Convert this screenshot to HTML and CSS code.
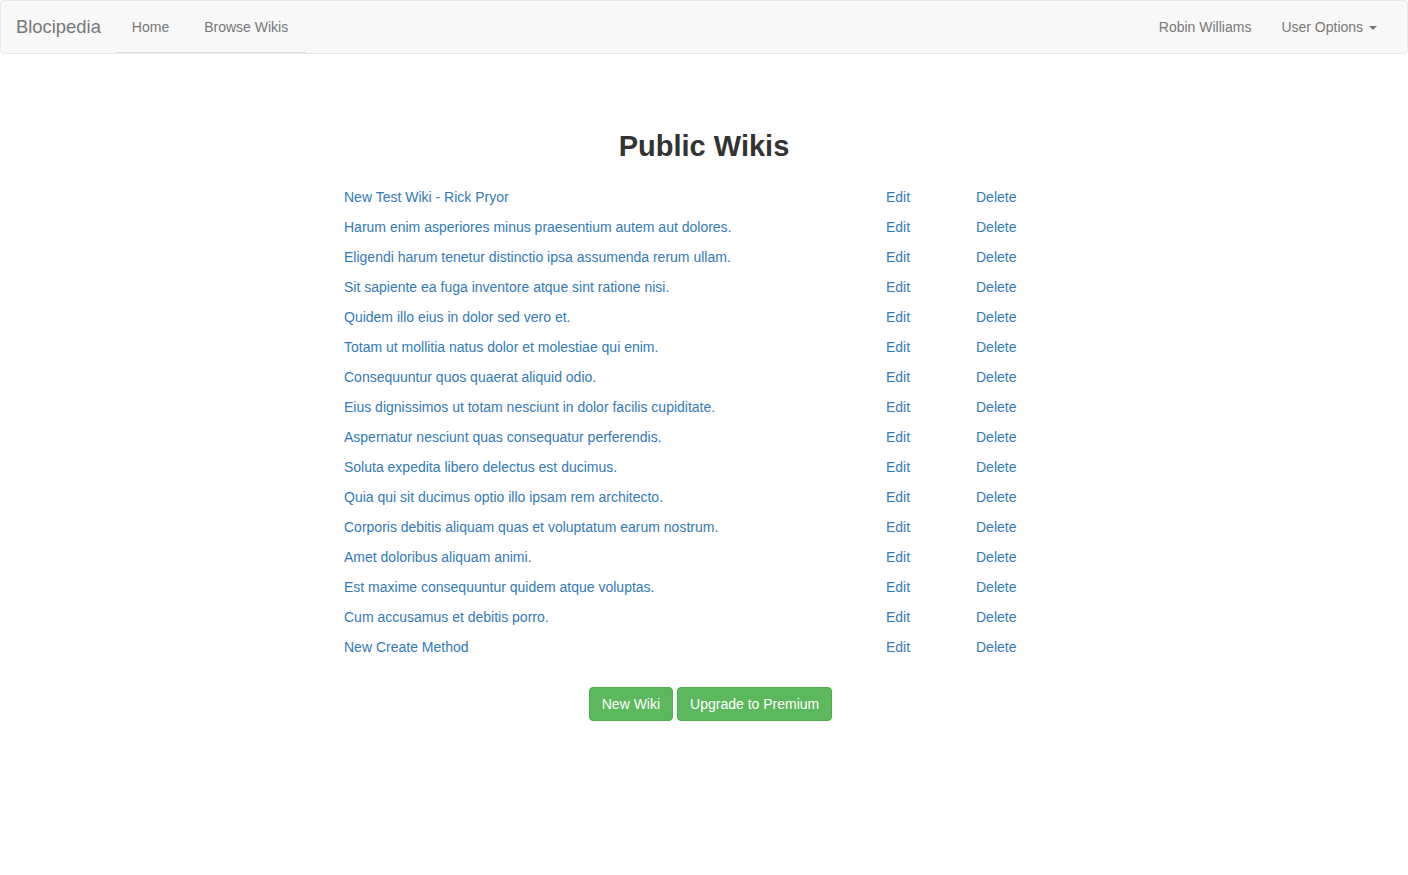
FILE: index.html
```html
<!DOCTYPE html>
<html>
<head>
<meta charset="utf-8">
<title>Blocipedia</title>
<link rel="stylesheet" href="styles.css">
</head>
<body>
<nav class="navbar">
  <a class="brand" href="#">Blocipedia</a>
  <ul class="nav nav-left">
    <li><a href="#">Home</a></li>
    <li><a href="#">Browse Wikis</a></li>
  </ul>
  <ul class="nav nav-right">
    <li><a href="#">Robin Williams</a></li>
    <li><a href="#">User Options <span class="caret"></span></a></li>
  </ul>
</nav>
<main class="content">
  <h1 class="title">Public Wikis</h1>
  <table class="wikis">
    <tbody>
      <tr><td class="c-title"><a href="#">New Test Wiki - Rick Pryor</a></td><td class="c-edit"><a href="#">Edit</a></td><td class="c-del"><a href="#">Delete</a></td></tr>
      <tr><td class="c-title"><a href="#">Harum enim asperiores minus praesentium autem aut dolores.</a></td><td class="c-edit"><a href="#">Edit</a></td><td class="c-del"><a href="#">Delete</a></td></tr>
      <tr><td class="c-title"><a href="#">Eligendi harum tenetur distinctio ipsa assumenda rerum ullam.</a></td><td class="c-edit"><a href="#">Edit</a></td><td class="c-del"><a href="#">Delete</a></td></tr>
      <tr><td class="c-title"><a href="#">Sit sapiente ea fuga inventore atque sint ratione nisi.</a></td><td class="c-edit"><a href="#">Edit</a></td><td class="c-del"><a href="#">Delete</a></td></tr>
      <tr><td class="c-title"><a href="#">Quidem illo eius in dolor sed vero et.</a></td><td class="c-edit"><a href="#">Edit</a></td><td class="c-del"><a href="#">Delete</a></td></tr>
      <tr><td class="c-title"><a href="#">Totam ut mollitia natus dolor et molestiae qui enim.</a></td><td class="c-edit"><a href="#">Edit</a></td><td class="c-del"><a href="#">Delete</a></td></tr>
      <tr><td class="c-title"><a href="#">Consequuntur quos quaerat aliquid odio.</a></td><td class="c-edit"><a href="#">Edit</a></td><td class="c-del"><a href="#">Delete</a></td></tr>
      <tr><td class="c-title"><a href="#">Eius dignissimos ut totam nesciunt in dolor facilis cupiditate.</a></td><td class="c-edit"><a href="#">Edit</a></td><td class="c-del"><a href="#">Delete</a></td></tr>
      <tr><td class="c-title"><a href="#">Aspernatur nesciunt quas consequatur perferendis.</a></td><td class="c-edit"><a href="#">Edit</a></td><td class="c-del"><a href="#">Delete</a></td></tr>
      <tr><td class="c-title"><a href="#">Soluta expedita libero delectus est ducimus.</a></td><td class="c-edit"><a href="#">Edit</a></td><td class="c-del"><a href="#">Delete</a></td></tr>
      <tr><td class="c-title"><a href="#">Quia qui sit ducimus optio illo ipsam rem architecto.</a></td><td class="c-edit"><a href="#">Edit</a></td><td class="c-del"><a href="#">Delete</a></td></tr>
      <tr><td class="c-title"><a href="#">Corporis debitis aliquam quas et voluptatum earum nostrum.</a></td><td class="c-edit"><a href="#">Edit</a></td><td class="c-del"><a href="#">Delete</a></td></tr>
      <tr><td class="c-title"><a href="#">Amet doloribus aliquam animi.</a></td><td class="c-edit"><a href="#">Edit</a></td><td class="c-del"><a href="#">Delete</a></td></tr>
      <tr><td class="c-title"><a href="#">Est maxime consequuntur quidem atque voluptas.</a></td><td class="c-edit"><a href="#">Edit</a></td><td class="c-del"><a href="#">Delete</a></td></tr>
      <tr><td class="c-title"><a href="#">Cum accusamus et debitis porro.</a></td><td class="c-edit"><a href="#">Edit</a></td><td class="c-del"><a href="#">Delete</a></td></tr>
      <tr><td class="c-title"><a href="#">New Create Method</a></td><td class="c-edit"><a href="#">Edit</a></td><td class="c-del"><a href="#">Delete</a></td></tr>
    </tbody>
  </table>
  <div class="actions">
    <a class="btn" href="#">New Wiki</a>
    <a class="btn" href="#">Upgrade to Premium</a>
  </div>
</main>
</body>
</html>
```

FILE: styles.css
```css
* { box-sizing: border-box; }
html, body { margin: 0; padding: 0; }
body {
  font-family: "Liberation Sans", Arial, sans-serif;
  font-size: 14px;
  line-height: 20px;
  color: #333;
  background: #fff;
}
a { color: #337ab7; text-decoration: none; }

.navbar {
  display: flex;
  align-items: flex-start;
  height: 54px;
  background: #f8f8f8;
  border: 1px solid #e7e7e7;
  border-radius: 4px;
  padding: 0 15px;
}
.brand {
  color: #777;
  font-size: 18.4px;
  line-height: 20px;
  padding: 16px 15px 15px 0;
}
.nav {
  list-style: none;
  margin: 0;
  padding: 0;
  display: flex;
}
.nav-left {
  height: 52px;
  border-bottom: 1px solid #ddd;
  padding-left: 1px;
  padding-right: 3px;
  gap: 5px;
}
.nav-right { margin-left: auto; }
.nav a {
  display: block;
  color: #777;
  padding: 16px 15px 15px;
  line-height: 20px;
}
.caret {
  display: inline-block;
  width: 0;
  height: 0;
  margin-left: 2px;
  vertical-align: middle;
  border-top: 4px solid #777;
  border-left: 4px solid transparent;
  border-right: 4px solid transparent;
}

.content {
  display: flex;
  flex-direction: column;
  align-items: center;
}
.title {
  font-size: 29px;
  font-weight: bold;
  line-height: 32px;
  color: #333;
  margin: 76px 0 20px;
}
.wikis {
  width: 730px;
  border-collapse: collapse;
}
.wikis td {
  padding: 5px;
  line-height: 20px;
  font-size: 14px;
}
.c-title { width: 542px; }
.c-edit { width: 90px; }
.c-del { width: 98px; }

.actions {
  margin-top: 25px;
  padding-left: 13px;
  display: flex;
  gap: 4px;
}
.btn {
  display: inline-block;
  color: #fff;
  background: #5cb85c;
  border: 1px solid #4cae4c;
  border-radius: 4px;
  padding: 6px 12px;
  font-size: 14px;
  line-height: 20px;
}
```
